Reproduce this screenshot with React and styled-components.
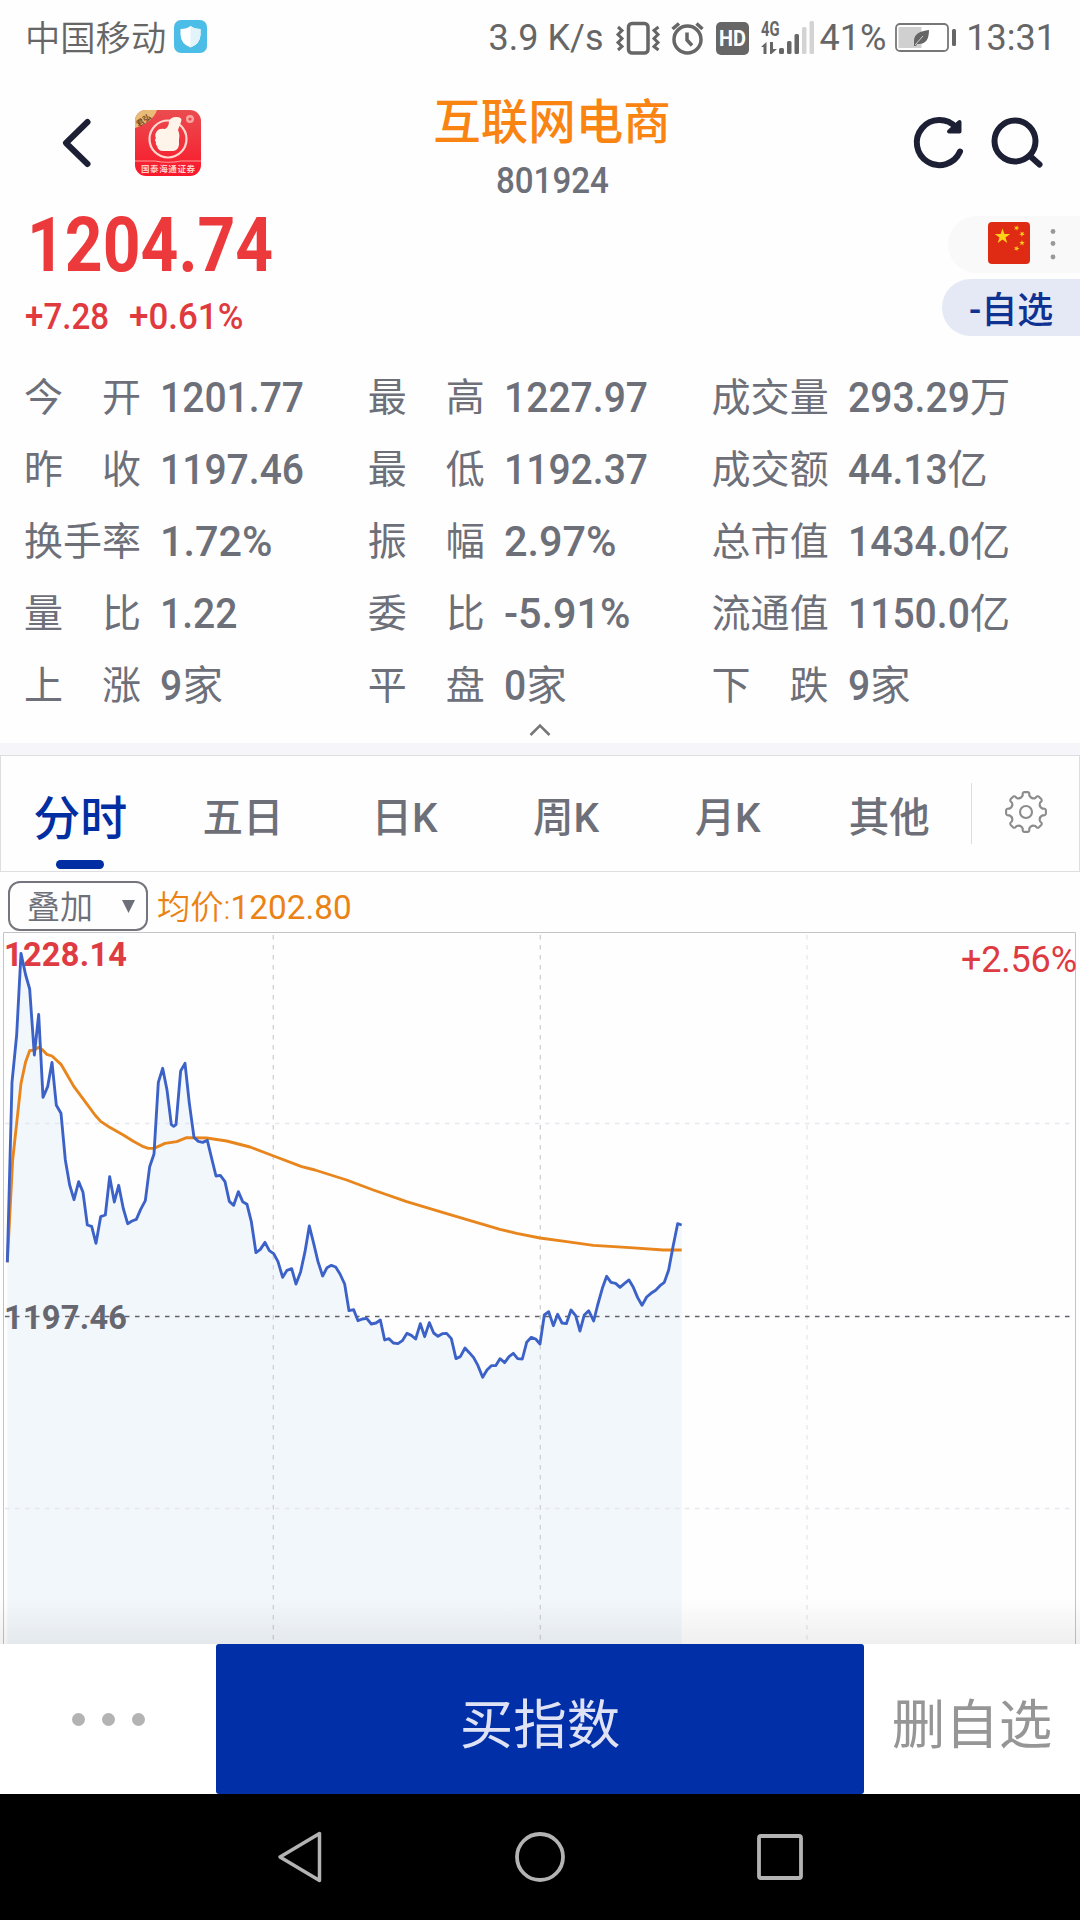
import React from 'react'
import styled, { createGlobalStyle } from 'styled-components'

const GlobalStyle = createGlobalStyle`
  * {
    box-sizing: border-box;
  }
  body {
    margin: 0;
    background: #fefefe;
    font-family: Roboto, 'Noto Sans CJK SC', sans-serif;
    color: #6d6f79;
  }
  svg {
    display: block;
    flex: none;
  }
`

const Screen = styled.div`
  width: 1080px;
  height: 1920px;
  display: flex;
  flex-direction: column;
  overflow: hidden;
`

// digits of the quote font are narrower than Roboto
const Num = styled.span`
  display: inline-block;
  white-space: nowrap;
  transform: scaleX(${({ $fit }) => $fit || 0.93});
  transform-origin: ${({ $from }) => $from || 'left'} center;
`

const StatusBar = styled.div`
  height: 74px;
  padding: 1px 24px 0 25px;
  display: flex;
  align-items: center;
  justify-content: space-between;
  color: #666;
  font-size: 36px;
`

const Carrier = styled.div`
  display: flex;
  align-items: center;
  gap: 8px;
  font-size: 35.3px;
  font-weight: 350;
  line-height: 40px;
  span {
    padding-top: 3px;
  }
  svg {
    margin-top: -2px;
  }
`

const StatusRight = styled.div`
  display: flex;
  align-items: center;
  line-height: 40px;
  white-space: nowrap;
`

const Speed = styled.span`
  margin-right: 10px;
`

const Charge = styled.span`
  margin: 0 9px 0 6px;
`

const Clock = styled.span`
  margin-left: 9px;
`

const Header = styled.header`
  height: 134px;
  display: grid;
  grid-template-columns: 340px 1fr 340px;
`

const HeaderLeft = styled.div`
  display: flex;
  align-items: flex-start;
  gap: 43px;
  padding: 36px 0 0 60px;
`

const HeaderRight = styled.div`
  display: flex;
  align-items: flex-start;
  gap: 23px;
  padding: 41px 0 0 172px;
`

const Title = styled.div`
  display: flex;
  flex-direction: column;
  align-items: center;
  padding: 22px 0 0 24px;
  h1 {
    margin: 0;
    font-size: 47.5px;
    line-height: 54px;
    font-weight: 500;
    color: #f98412;
    white-space: nowrap;
  }
  span {
    margin-top: 10px;
    font-size: 36px;
    font-weight: 500;
    line-height: 42px;
  }
`

const Quote = styled.section`
  height: 153px;
  display: flex;
  justify-content: space-between;
`

const Price = styled.div`
  padding-left: 27px;
  color: #ec3a3c;
  font-size: 76px;
  line-height: 74px;
  font-weight: 700;
`

const Change = styled.div`
  display: flex;
  padding: 14px 0 0 25px;
  color: #e0393e;
  font-size: 36px;
  font-weight: 500;
  line-height: 42px;
  span:first-child {
    width: 104px;
  }
`

const Pills = styled.div`
  display: flex;
  flex-direction: column;
  align-items: flex-end;
  gap: 6px;
  padding-top: 8px;
`

const MarketPill = styled.div`
  width: 132px;
  height: 57px;
  padding: 6px 0 0 40px;
  border-radius: 29px 0 0 29px;
  background: #f9f9f9;
  display: flex;
  align-items: flex-start;
  gap: 20px;
`

const WatchPill = styled.div`
  width: 138px;
  height: 57px;
  padding-left: 27px;
  border-radius: 29px 0 0 29px;
  background: #e4e9f5;
  color: #0e3192;
  font-size: 36px;
  font-weight: 500;
  line-height: 64px;
  white-space: nowrap;
`

const Stats = styled.section`
  height: 359px;
  padding: 1px 0 0 24px;
  display: grid;
  grid-template-columns: repeat(3, 343.8px);
  grid-auto-rows: 72px;
`

const Stat = styled.div`
  display: flex;
  align-items: center;
  gap: 19px;
  white-space: nowrap;
  line-height: 50px;
`

const Label = styled.div`
  width: 117px;
  display: flex;
  justify-content: space-between;
  font-size: 39px;
`

const Value = styled.div`
  display: flex;
  font-size: 42px;
  font-weight: 500;
  em {
    font-style: normal;
    font-size: 40.5px;
    font-weight: 400;
    margin-left: ${({ $pull }) => $pull}px;
  }
`

const Fold = styled.div`
  height: 23px;
  display: flex;
  justify-content: center;
  padding-top: 3px;
`

const Band = styled.div`
  height: 12px;
  background: #f5f5fa;
`

const Tabs = styled.nav`
  height: 117px;
  border: 1px solid #dedede;
  display: flex;
`

const Tab = styled.div`
  width: 161.6px;
  display: flex;
  flex-direction: column;
  align-items: center;
  padding: ${({ $active }) => ($active ? '32px 3px 0 0' : '31px 1px 0 0')};
  font-size: ${({ $active }) => ($active ? 47 : 40.5)}px;
  font-weight: 500;
  line-height: 62px;
  color: ${({ $active }) => ($active ? '#022ea3' : '#6d6f79')};
  &::after {
    content: '';
    width: 48px;
    height: 9px;
    margin-top: 10px;
    border-radius: 5px;
    background: ${({ $active }) => ($active ? '#022ea3' : 'transparent')};
  }
`

const Settings = styled.div`
  flex: 1;
  height: 61px;
  margin-top: 27px;
  border-left: 1px solid #dcdcdc;
  padding: 7px 0 0 33px;
`

const Tools = styled.div`
  height: 60px;
  display: flex;
  align-items: flex-start;
  padding: 9px 0 0 8px;
  gap: 9px;
`

const Select = styled.div`
  width: 140px;
  height: 50px;
  padding: 0 11px 0 17px;
  border: 2px solid #74757d;
  border-radius: 12px;
  display: flex;
  align-items: center;
  justify-content: space-between;
  font-size: 33px;
  font-weight: 350;
  span {
    line-height: 46px;
    padding-top: 3px;
  }
`

const Average = styled.div`
  font-size: 33.3px;
  line-height: 54px;
  color: #ea8314;
  span {
    font-weight: 350;
  }
`

const ChartBox = styled.div`
  position: relative;
  height: 712px;
  &::after {
    content: '';
    position: absolute;
    left: 0;
    right: 0;
    bottom: 0;
    height: 46px;
    background: linear-gradient(rgba(0, 0, 0, 0), rgba(0, 0, 0, 0.06));
  }
`

const BottomBar = styled.div`
  height: 150px;
  display: flex;
  background: #fff;
`

const More = styled.div`
  width: 216px;
  display: flex;
  justify-content: center;
  align-items: center;
  gap: 17px;
  i {
    width: 13px;
    height: 13px;
    border-radius: 50%;
    background: #b3b3b3;
  }
`

const BuyButton = styled.button`
  width: 648px;
  padding: 13px 0 0;
  border: 0;
  border-radius: 3px;
  background: #012fa7;
  color: #dfe2f5;
  font: 400 53.5px/60px Roboto, 'Noto Sans CJK SC', sans-serif;
`

const RemoveButton = styled(BuyButton)`
  width: 216px;
  background: none;
  color: #969696;
`

const NavBar = styled.div`
  flex: 1;
  background: #000;
  display: flex;
  justify-content: center;
  align-items: center;
  gap: 188px;
`

const stats = [
  ['今开', '1201.77'],
  ['最高', '1227.97'],
  ['成交量', '293.29', '万'],
  ['昨收', '1197.46'],
  ['最低', '1192.37'],
  ['成交额', '44.13', '亿'],
  ['换手率', '1.72%'],
  ['振幅', '2.97%'],
  ['总市值', '1434.0', '亿'],
  ['量比', '1.22'],
  ['委比', '-5.91%'],
  ['流通值', '1150.0', '亿'],
  ['上涨', '9', '家'],
  ['平盘', '0', '家'],
  ['下跌', '9', '家'],
]

const tabs = ['分时', '五日', '日K', '周K', '月K', '其他']

// both lines are stored at three units per pixel
const priceLine = `22,1027 36,487 50,345 63,100 77,165 89,207 103,405 116,283 129,532 143,500 156,427
169,556 183,580 196,720 209,795 222,839 236,785 249,817 262,915 275,919 288,970 302,890 316,885
329,770 343,846 356,796 370,866 383,911 396,903 409,898 422,868 436,842 449,740 462,702 475,487
488,445 501,510 514,614 521,619 528,614 542,453 555,430 568,550 582,652 595,664 608,667 622,661
635,715 648,768 661,766 675,785 688,844 701,856 715,815 728,845 741,853 754,905 768,998 781,988
795,967 808,992 821,1001 834,1025 848,1072 861,1051 875,1046 888,1092 902,1055 915,995 928,918
941,970 954,1025 968,1068 981,1043 994,1036 1007,1041 1020,1062 1034,1092 1047,1172 1061,1169
1074,1202 1087,1197 1100,1195 1114,1212 1128,1209 1141,1200 1154,1260 1167,1256 1180,1269
1194,1271 1207,1262 1221,1240 1234,1246 1247,1257 1261,1211 1274,1250 1288,1208 1301,1239
1314,1249 1327,1241 1340,1240 1354,1256 1368,1316 1381,1310 1395,1284 1408,1298 1421,1313
1434,1337 1448,1372 1461,1350 1474,1337 1487,1337 1500,1316 1514,1328 1527,1310 1540,1300
1553,1316 1567,1317 1580,1267 1594,1252 1607,1257 1620,1272 1633,1185 1646,1175 1660,1217
1673,1183 1686,1209 1699,1211 1713,1170 1727,1187 1740,1233 1753,1185 1766,1172 1781,1203
1793,1155 1807,1105 1820,1069 1833,1087 1847,1090 1860,1102 1873,1091 1887,1080 1900,1102
1913,1133 1926,1156 1940,1131 1953,1120 1967,1111 1980,1097 1993,1087 2006,1050 2019,980
2033,911 2045,915`

const averageLine = `22,1027 38,720 50,610 63,490 77,425 89,392 103,390 116,382 128,390 140,403 156,408
183,433 222,500 262,554 285,585 302,604 329,622 370,645 400,664 430,680 445,685 462,685 495,670
530,665 560,653 620,654 680,663 750,681 821,708 905,740 945,750 1040,780 1120,810 1220,845
1340,881 1500,928 1550,940 1620,954 1700,965 1780,976 1890,983 1990,990 2045,990`

const Chart = () => {
  return (
    <svg width="1080" height="712" viewBox="0 932 1080 712">
      <g transform="translate(0 920) scale(0.33333)">
        <polygon points={`22,2200 ${priceLine} 2045,2200`} fill="#f2f7fc" />
      </g>
      <g fill="none" strokeWidth="1.3" strokeDasharray="4.5 5.5">
        <path d="M273.3 935V1644M540.3 935V1644" stroke="#cfd0d6" />
        <path d="M807 935V1644" stroke="#e6e6ea" />
        <path d="M5 1123.5H1075M5 1508.5H1075" stroke="#e7e8ee" />
        <path d="M5 1316.5H1075" stroke="#5f6068" />
      </g>
      <path d="M3.5 1644V932.5H1075.5V1644" fill="none" stroke="#c4c4c8" />
      <text x="4" y="966" fontSize="32.5" fontWeight="700" fill="#df3b42" textLength="123">1228.14</text>
      <text x="4" y="1329" fontSize="32.5" fontWeight="700" fill="#66676f" textLength="123">1197.46</text>
      <text x="1077" y="972" fontSize="36" fill="#de3a42" textAnchor="end" textLength="116">+2.56%</text>
      <g transform="translate(0 920) scale(0.33333)" fill="none" strokeWidth="8.6" strokeLinejoin="round">
        <polyline points={averageLine} stroke="#e8851c" />
        <polyline points={priceLine} stroke="#3c62c8" />
      </g>
    </svg>
  )
}

const AppLogo = () => {
  return (
    <svg width="66" height="66" viewBox="0 0 66 66">
      <defs>
        <clipPath id="logo"><rect width="66" height="66" rx="11" /></clipPath>
        <linearGradient id="red" x1="0" y1="0" x2="0" y2="1">
          <stop offset="0" stopColor="#ea4c50" />
          <stop offset="1" stopColor="#f9182a" />
        </linearGradient>
      </defs>
      <g clipPath="url(#logo)">
        <rect width="66" height="66" fill="url(#red)" />
        <path d="M0 0H22Q18 12 0 18Z" fill="#e9bd77" />
        <text x="1" y="15" fontSize="8" fontWeight="700" fill="#7a4b22" transform="rotate(-36 6 12)">君弘</text>
        <circle cx="33" cy="29" r="18.5" fill="none" stroke="#ffd9d0" strokeWidth="2.2" />
        <path
          d="M22 21Q24 18 30 19Q34 17 34 11Q36 7 41 7Q48 7 46 12L43 20Q45 24 44 30V35Q43 41 37 41H28Q23 41 22 36Q20 34 21 32Q19 30 21 28Q19 25 22 21Z"
          fill="#fff4ea"
        />
        <circle cx="55" cy="9" r="4" fill="#f9a6a2" />
        <circle cx="55" cy="9" r="1.6" fill="#e94a4d" />
        <path d="M0 51H20Q33 53.5 46 51H66" fill="none" stroke="#ff9b96" strokeWidth="1.2" />
        <text x="6" y="62" fontSize="8.5" fontWeight="700" fill="#ffd0c9" textLength="54">国泰海通证券</text>
      </g>
    </svg>
  )
}

const Flag = () => {
  const star = 'M0-9L2.1-2.8H8.6L3.3 1L5.3 7.3L0 3.4L-5.3 7.3L-3.3 1L-8.6-2.8H-2.1Z'
  return (
    <svg width="42" height="42" viewBox="0 0 42 42">
      <rect width="42" height="42" rx="4" fill="#e02b14" />
      <g fill="#ffd21a">
        <path d={star} transform="translate(14.5 14.5) scale(.9)" />
        <path d={star} transform="translate(28.5 6) rotate(20) scale(.33)" />
        <path d={star} transform="translate(34 12) rotate(40) scale(.33)" />
        <path d={star} transform="translate(34 21) scale(.33)" />
        <path d={star} transform="translate(28.5 26.5) rotate(20) scale(.33)" />
      </g>
    </svg>
  )
}

// vibrate, alarm, HD badge, 4G signal
const StatusIcons = () => {
  return (
    <svg width="200" height="40" viewBox="614 16 200 40">
      <g fill="none" stroke="#666" strokeWidth="3.5">
        <rect x="628.5" y="21.5" width="19.5" height="29.5" rx="3.5" />
        <path d="M618 25L622 28.5L618 32.5L622 36.5L618 40.5L622 44.5L618 48" strokeWidth="3" />
        <path d="M658.5 25L654 28.5L658 32.5L654 36.5L658 40.5L654 44.5L658.5 48" strokeWidth="3" />
        <circle cx="687.5" cy="37.5" r="13.5" />
        <path d="M687 30.5V38L692 43.5M672.5 27L679 21.5M702.5 27L696.5 21.5" />
      </g>
      <rect x="716" y="20" width="33" height="33" rx="5" fill="#666" />
      <text x="732.5" y="44" fontSize="21.5" fontWeight="700" fill="#fff" textAnchor="middle" textLength="27" lengthAdjust="spacingAndGlyphs">HD</text>
      <text x="761" y="33.5" fontSize="20" fontWeight="700" fill="#666" textLength="18.5" lengthAdjust="spacingAndGlyphs">4G</text>
      <g fill="#666">
        <path d="M761 45L766.5 40V52H763.5V45ZM770 40V52H771.5L777 47H773V40Z" />
        <rect x="779" y="46" width="5" height="6" rx="1.5" />
        <rect x="787" y="39" width="4.5" height="13" rx="1.5" />
        <rect x="794.5" y="32" width="4.5" height="20" rx="1.5" />
      </g>
      <g fill="#d3d3d3">
        <rect x="802" y="25" width="4.5" height="27" rx="1.5" />
        <rect x="809.5" y="19" width="4.5" height="33" rx="1.5" />
      </g>
    </svg>
  )
}

const Battery = () => {
  return (
    <svg width="62" height="30" viewBox="0 0 62 30">
      <rect x="1" y="1" width="52" height="27" rx="4" fill="#fff" stroke="#777" strokeWidth="1.8" />
      <rect x="3.5" y="4" width="23" height="21" fill="#d0d0d0" />
      <path d="M34 7C25 8 19 11 19 18L19 23L21 23L22 21C31 22 34 16 34 7Z" fill="#666" />
      <path d="M20 22L28 13" stroke="#d0d0d0" strokeWidth="1" />
      <rect x="57" y="6" width="4" height="17" rx="1.5" fill="#666" />
    </svg>
  )
}

// eight teeth with flat tips, rounded valleys between them
const gearPath = () => {
  let d = ''
  for (let i = 0; i < 8; i++) {
    const at = (turn, r) => {
      const a = ((i * 45 + turn) * Math.PI) / 180
      return `${(21 + r * Math.sin(a)).toFixed(1)} ${(22 - r * Math.cos(a)).toFixed(1)}`
    }
    d += `${i ? 'L' : 'M'}${at(-11, 17)}Q${at(-11, 20)} ${at(-5, 20)}L${at(5, 20)}Q${at(11, 20)} ${at(11, 17)}Q${at(22.5, 13.5)} ${at(34, 17)}`
  }
  return d + 'Z'
}

const Gear = () => {
  return (
    <svg width="42" height="44" viewBox="0 0 42 44" fill="none" stroke="#8c8c8c" strokeWidth="2.1" strokeLinejoin="round">
      <path d={gearPath()} />
      <circle cx="21" cy="22" r="6" />
    </svg>
  )
}

const App = () => {
  return (
    <Screen>
      <GlobalStyle />
      <StatusBar>
        <Carrier>
          <span>中国移动</span>
          <svg width="33" height="33" viewBox="0 0 33 33">
            <rect width="33" height="33" rx="7" fill="#4cbde6" />
            <path d="M16.5 6Q20 9 26.5 9V15Q26 24 16.5 27.5Q7 24 6.5 15V9Q13 9 16.5 6Z" fill="#fff" />
            <path d="M16.5 6Q20 9 26.5 9V15Q26 24 16.5 27.5Z" fill="#e2f3fa" />
          </svg>
        </Carrier>
        <StatusRight>
          <Speed>3.9 K/s</Speed>
          <StatusIcons />
          <Charge>41%</Charge>
          <Battery />
          <Clock>13:31</Clock>
        </StatusRight>
      </StatusBar>

      <Header>
        <HeaderLeft>
          <svg width="32" height="66" viewBox="60 110 32 66" fill="none" stroke="#1d2034" strokeWidth="6" strokeLinecap="round" strokeLinejoin="round">
            <path d="M87.500 122L66 143L87.500 164" />
          </svg>
          <AppLogo />
        </HeaderLeft>
        <Title>
          <h1>互联网电商</h1>
          <Num $from="center" $fit={0.92}>801924</Num>
        </Title>
        <HeaderRight>
          <svg width="54" height="56" viewBox="912 115 54 56" fill="none" stroke="#1d2034" strokeWidth="6" strokeLinecap="round">
            <path d="M956 127.500A22.500 22.500 0 1 0 960 151.500" />
            <path d="M949 131.500H959.500V122Z" strokeWidth="4" fill="#1d2034" strokeLinejoin="round" />
          </svg>
          <svg width="56" height="56" viewBox="989 115 56 56" fill="none" stroke="#1d2034" strokeWidth="6" strokeLinecap="round">
            <circle cx="1015" cy="141" r="20.500" />
            <path d="M1030 156L1039.500 164.500" />
          </svg>
        </HeaderRight>
      </Header>

      <Quote>
        <div>
          <Price><Num $fit={0.868}>1204.74</Num></Price>
          <Change>
            <Num $fit={0.92}>+7.28</Num>
            <Num $fit={0.97}>+0.61%</Num>
          </Change>
        </div>
        <Pills>
          <MarketPill>
            <Flag />
            <svg width="6" height="42" viewBox="0 0 6 42" fill="#999">
              <circle cx="3" cy="9.5" r="2.4" />
              <circle cx="3" cy="21.5" r="2.4" />
              <circle cx="3" cy="35" r="2.4" />
            </svg>
          </MarketPill>
          <WatchPill>-自选</WatchPill>
        </Pills>
      </Quote>

      <Stats>
        {stats.map(([name, num, unit]) => (
          <Stat key={name}>
            <Label>
              {name.split('').map((c) => (
                <span key={c}>{c}</span>
              ))}
            </Label>
            <Value $pull={-num.length * 1.5}>
              <Num $fit={num.endsWith('%') ? 0.985 : 0.93}>{num}</Num>
              {unit && <em>{unit}</em>}
            </Value>
          </Stat>
        ))}
      </Stats>
      <Fold>
        <svg width="22" height="14" viewBox="0 0 22 14" fill="none" stroke="#777" strokeWidth="2.5">
          <path d="M1.5 12L11 2.5L20.5 12" />
        </svg>
      </Fold>
      <Band />

      <Tabs>
        {tabs.map((t, i) => (
          <Tab key={t} $active={i === 0}>{t}</Tab>
        ))}
        <Settings>
          <Gear />
        </Settings>
      </Tabs>

      <Tools>
        <Select>
          <span>叠加</span>
          <svg width="13" height="13" viewBox="0 0 13 13"><path d="M0 0H13L6.5 13Z" fill="#6d6f79" /></svg>
        </Select>
        <Average><span>均价:</span>1202.80</Average>
      </Tools>
      <ChartBox>
        <Chart />
      </ChartBox>

      <BottomBar>
        <More><i /><i /><i /></More>
        <BuyButton>买指数</BuyButton>
        <RemoveButton>删自选</RemoveButton>
      </BottomBar>
      <NavBar>
        <svg width="50" height="54" viewBox="0 0 50 54" fill="none" stroke="#b3b3b3" strokeWidth="3.5" strokeLinejoin="round">
          <path d="M44.5 3.5V50.5L5 27Z" />
        </svg>
        <svg width="54" height="54" viewBox="0 0 54 54" fill="none" stroke="#b3b3b3" strokeWidth="3.8">
          <circle cx="27" cy="27" r="23" />
        </svg>
        <svg width="50" height="54" viewBox="0 0 50 54" fill="none" stroke="#b3b3b3" strokeWidth="3.8">
          <rect x="4" y="6" width="42" height="42" rx="2" />
        </svg>
      </NavBar>
    </Screen>
  )
}

export default App
